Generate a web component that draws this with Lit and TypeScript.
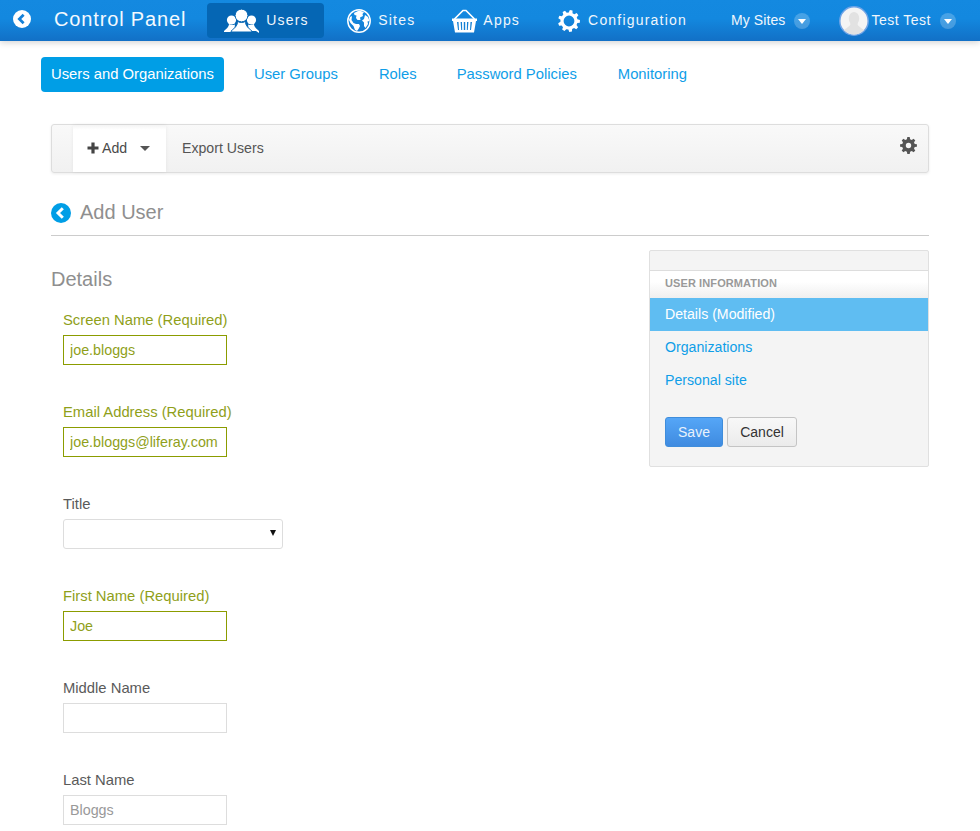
import { LitElement, html, css, svg } from "lit";
import { customElement } from "lit/decorators.js";

function gearPath(cx: number, cy: number, outer: number, inner: number, hole: number, teeth: number, rot = 0): string {
  let d = "";
  const step = (Math.PI * 2) / teeth;
  for (let i = 0; i < teeth; i++) {
    const a = i * step - Math.PI / 2 + rot;
    const pts: [number, number][] = [
      [inner, a - step * 0.32],
      [outer, a - step * 0.18],
      [outer, a + step * 0.18],
      [inner, a + step * 0.32],
    ];
    for (const [r, t] of pts) {
      d += `${d ? "L" : "M"}${(cx + r * Math.cos(t)).toFixed(2)} ${(cy + r * Math.sin(t)).toFixed(2)}`;
    }
  }
  d += `Z M${cx + hole} ${cy}A${hole} ${hole} 0 1 0 ${cx - hole} ${cy}A${hole} ${hole} 0 1 0 ${cx + hole} ${cy}Z`;
  return d;
}

const backIcon = (bg: string, fg: string, size: number) => html`<svg width=${size} height=${size} viewBox="0 0 20 20">
  <circle cx="10" cy="10" r="10" fill=${bg}></circle>
  <path d="M11.8 5.2 L7 10 L11.8 14.8" fill="none" stroke=${fg} stroke-width="3"></path>
</svg>`;

const usersIcon = html`<svg width="35" height="24" viewBox="0 0 35 24" fill="#fff">
  <circle cx="7.5" cy="11" r="4.6"></circle>
  <path d="M5 15 C5 18 2 20 0 22 L0 23 L10 23 L11 15.5 C9 16.4 7 16.2 5 15Z"></path>
  <circle cx="27.5" cy="11" r="4.6"></circle>
  <path d="M30 15 C30 18 33 20 35 22 L35 24 L32 22 L25 22 L24 15.5 C26 16.4 28 16.2 30 15Z"></path>
  <g stroke="#0566b4" stroke-width="1">
    <circle cx="17.5" cy="6.5" r="6.3"></circle>
    <path d="M13.5 12 C14 16 10.5 19.5 7.5 21.5 L7 23 L28 23 L27.5 21.5 C24.5 19.5 21 16 21.5 12 C20 14 15 14 13.5 12Z"></path>
  </g>
  <circle cx="17.5" cy="6.5" r="5.8"></circle>
</svg>`;

const globeIcon = html`<svg width="24" height="24" viewBox="0 0 24 24">
  <circle cx="12" cy="12" r="11.2" fill="none" stroke="#fff" stroke-width="1.5"></circle>
  <path fill="#fff" d="M7 4 L12 1.5 L17 3 L15.5 5 L16 7 L13 8.5 L13.5 11 L10.5 11 L9 9 L9.5 6.5 L7.5 6Z"></path>
  <path fill="#fff" d="M3 8 L5 7 L4.5 11 L6.5 14 L9 15 L12 15 L13 17 L11.5 20 L10 22 L8 21 L6.5 17 L3.5 14 L2 11Z"></path>
  <path fill="#fff" d="M18 6 L21 8 L22.5 12 L20.5 12.5 L21 15 L18.5 19 L17 17 L17 13.5 L15 11.5 L17 10Z"></path>
</svg>`;

const basketIcon = html`<svg width="25" height="24" viewBox="0 0 25 24" fill="#fff">
  <path d="M2.5 10 L11 1.5 L14 1.5 L22.5 10" fill="none" stroke="#fff" stroke-width="1.7"></path>
  <path d="M0 9.5 H25 V12 H24 L22 23.5 H3 L1 12 H0Z"></path>
  <path fill="#1480d4" d="M5 13 H6.5 L7 21 H6Z M8.6 13 H10 L10.2 21 H9.2Z M11.8 13 H13.2 V21 H11.8Z M15 13 H16.4 L15.8 21 H14.8Z M18.5 13 H20 L19 21 H18Z"></path>
</svg>`;

const configGear = html`<svg width="22" height="22" viewBox="0 0 22 22">
  <path fill="#fff" fill-rule="evenodd" d=${gearPath(11, 11, 11, 8.6, 5.4, 9, 0.2)}></path>
</svg>`;

const toolGear = html`<svg width="17" height="17" viewBox="0 0 17 17">
  <path fill="#555" fill-rule="evenodd" d=${gearPath(8.5, 8.5, 8.5, 6.4, 2.7, 8)}></path>
</svg>`;

const caret = html`<span class="caret-circle"></span>`;

const avatar = html`<svg class="avatar" width="30" height="30" viewBox="0 0 30 30">
  <defs><clipPath id="av"><circle cx="15" cy="15" r="13.5"></circle></clipPath></defs>
  <circle cx="15" cy="15" r="14.2" fill="#f4f4f4" stroke="#6ea3e6" stroke-width="1.5"></circle>
  <g clip-path="url(#av)">
    ${svg`<ellipse cx="15" cy="12.5" rx="5.2" ry="6.6" fill="#e2e2e2"></ellipse>
    <path d="M11.5 17 C12 20 7 22 5 24 L5 30 H25 V24 C23 22 18 20 18.5 17Z" fill="#e2e2e2"></path>`}
  </g>
</svg>`;

@customElement("app-root")
export class AppRoot extends LitElement {
  static styles = css`
    :host {
      display: block;
      font-family: "Liberation Sans", Arial, sans-serif;
      color: #555;
      background: #fff;
      height: 831px;
      overflow: hidden;
    }
    * { box-sizing: border-box; }
    a { text-decoration: none; }
    svg { display: block; flex: none; }

    .topbar {
      height: 41px;
      display: flex;
      align-items: center;
      background: linear-gradient(#1489e0 0%, #1388df 45%, #1270c6 100%);
      box-shadow: 0 2px 6px rgba(0, 0, 0, 0.16);
      color: #fff;
      position: relative;
    }
    .back { margin-left: 13px; margin-top: -3px; }
    .brand {
      margin-left: 23px;
      margin-top: -2px;
      font-size: 20px;
      letter-spacing: 0.85px;
      color: #f4f9fe;
      white-space: nowrap;
    }
    .nav-item {
      display: flex;
      align-items: center;
      height: 35px;
      font-size: 14px;
      letter-spacing: 1.2px;
      color: #f0f6fc;
      white-space: nowrap;
    }
    .nav-item span, .plain span { margin-top: -2px; }
    .nav-users {
      margin-left: 21px;
      width: 117px;
      padding-left: 17px;
      gap: 8px;
      background: #0566b4;
      border-radius: 4px;
    }
    .nav-users span { margin-left: -1px; }
    .nav-sites { margin-left: 23px; gap: 7px; }
    .nav-apps { margin-left: 37px; gap: 6px; }
    .nav-config { margin-left: 38px; gap: 8px; }
    .plain {
      display: flex;
      align-items: center;
      font-size: 14px;
      color: #f0f6fc;
      letter-spacing: 0.1px;
      white-space: nowrap;
    }
    .mysites { margin-left: 44px; gap: 9px; }
    .user { margin-left: 29px; }
    .user .name { margin-left: 2px; margin-right: 9px; letter-spacing: 0.5px; }
    .plain .caret-circle {
      display: block;
      position: relative;
      width: 16px;
      height: 16px;
      margin-top: 0;
      border-radius: 50%;
      background: rgba(255, 255, 255, 0.22);
    }
    .caret-circle::after {
      content: "";
      position: absolute;
      left: 4px;
      top: 6px;
      border-left: 4px solid transparent;
      border-right: 4px solid transparent;
      border-top: 5px solid #fff;
    }

    .subnav {
      display: flex;
      align-items: flex-start;
      margin: 16px 0 0 41px;
      height: 35px;
      font-size: 14.8px;
      line-height: 34px;
    }
    .subnav a { color: #0f9ee8; white-space: nowrap; }
    .subnav a.active {
      background: #009ee6;
      color: #fff;
      border-radius: 4px;
      height: 35px;
      padding: 0 10px;
      width: 183px;
    }
    .subnav a.ug { margin-left: 30px; }
    .subnav a.rl { margin-left: 41px; }
    .subnav a.pp { margin-left: 40px; }
    .subnav a.mn { margin-left: 41px; }

    .content { padding: 32px 51px 0; }
    .toolbar {
      height: 49px;
      border: 1px solid #ddd;
      border-radius: 3px;
      box-shadow: 0 1px 3px rgba(0, 0, 0, 0.08);
      background: linear-gradient(#f9f9f9, #f1f1f1);
      display: flex;
      align-items: stretch;
      font-size: 14.15px;
    }
    .add {
      margin-left: 21px;
      width: 93px;
      background: linear-gradient(#f4f4f4, #ffffff 10%);
      box-shadow: 0 0 4px rgba(0, 0, 0, 0.06);
      display: flex;
      align-items: center;
      padding: 0 0 2px 14px;
      gap: 3px;
      color: #4a4a4a;
    }
    .add .down {
      margin-left: 10px;
      margin-top: 1px;
      border-left: 5px solid transparent;
      border-right: 5px solid transparent;
      border-top: 5px solid #555;
    }
    .export { margin: -2px 0 0 16px; align-self: center; color: #555; }
    .spacer { flex: 1; }
    .tool-gear { margin: 12px 11px 0 0; }

    .title-row {
      display: flex;
      align-items: center;
      gap: 9px;
      height: 63px;
      border-bottom: 1px solid #ccc;
      padding-top: 17px;
      font-size: 20px;
      color: #8f8f8f;
    }

    .columns { display: flex; justify-content: space-between; align-items: flex-start; }
    .form { padding-top: 31px; }
    .form h3 {
      margin: 0;
      font-size: 20px;
      line-height: 24px;
      font-weight: 400;
      color: #8f8f8f;
    }
    .fields { padding: 20px 0 0 12px; display: flex; flex-direction: column; gap: 32px; }
    .field { display: flex; flex-direction: column; height: 60px; }
    .field label { font-size: 14.8px; line-height: 18px; height: 24px; color: #5a5a5a; }
    .field input {
      width: 164px;
      height: 30px;
      border: 1px solid #ddd;
      border-radius: 0;
      padding: 0 6px;
      font: 14.3px "Liberation Sans", Arial, sans-serif;
      color: #555;
      background: #fff;
      outline: none;
    }
    .field input::placeholder { color: #999; opacity: 1; }
    .select-wrap { position: relative; width: 220px; height: 30px; }
    .select-wrap::after {
      content: "";
      position: absolute;
      right: 7px;
      top: 11px;
      border-left: 3px solid transparent;
      border-right: 3px solid transparent;
      border-top: 6px solid #111;
      pointer-events: none;
    }
    .select-wrap select {
      appearance: none;
      display: block;
      width: 220px;
      height: 30px;
      border: 1px solid #ddd;
      border-radius: 3px;
      background: #fff;
      font: 14px "Liberation Sans", Arial, sans-serif;
    }
    .field.ok label { color: #8f9f1a; }
    .field.ok input { border-color: #8b9c00; color: #8f9f1a; }

    .panel {
      margin-top: 14px;
      width: 280px;
      height: 217px;
      background: #f4f4f4;
      border: 1px solid #e0e0e0;
      border-radius: 2px;
      font-size: 14.15px;
    }
    .panel-top { height: 19px; }
    .panel-head {
      height: 28px;
      border-top: 1px solid #ddd;
      background: linear-gradient(#fff, #fff 40%, #efefef);
      padding-left: 15px;
      font-size: 11px;
      line-height: 24px;
      font-weight: 700;
      letter-spacing: 0.1px;
      color: #999;
    }
    .panel a {
      display: block;
      height: 33px;
      line-height: 32px;
      padding-left: 15px;
      color: #0f9ee8;
    }
    .panel a.sel { background: #5fbdf2; color: #fff; }
    .btns { display: flex; gap: 4px; padding: 20px 0 0 15px; }
    .btn {
      height: 30px;
      font: 14px "Liberation Sans", Arial, sans-serif;
      border-radius: 3px;
      padding: 0;
    }
    .save {
      width: 58px;
      color: #e8f2fc;
      border: 1px solid #3f8ddb;
      background: linear-gradient(#55a6f7, #3f8be0);
    }
    .cancel {
      width: 70px;
      color: #333;
      border: 1px solid #c4c4c4;
      background: linear-gradient(#f8f8f8, #ebebeb);
    }
  `;

  render() {
    return html`
      <header class="topbar">
        <span class="back">${backIcon("#fff", "#1480d8", 18)}</span>
        <span class="brand">Control Panel</span>
        <span class="nav-item nav-users">${usersIcon}<span>Users</span></span>
        <span class="nav-item nav-sites">${globeIcon}<span>Sites</span></span>
        <span class="nav-item nav-apps">${basketIcon}<span>Apps</span></span>
        <span class="nav-item nav-config">${configGear}<span>Configuration</span></span>
        <span class="plain mysites"><span>My Sites</span>${caret}</span>
        <span class="plain user">${avatar}<span class="name">Test Test</span>${caret}</span>
      </header>

      <nav class="subnav">
        <a class="active" href="#">Users and Organizations</a>
        <a class="ug" href="#">User Groups</a>
        <a class="rl" href="#">Roles</a>
        <a class="pp" href="#">Password Policies</a>
        <a class="mn" href="#">Monitoring</a>
      </nav>

      <main class="content">
        <div class="toolbar">
          <div class="add">
            <svg width="12" height="12" viewBox="0 0 12 12"><path fill="#444" d="M4.4 0.5 H7.6 V4.4 H11.5 V7.6 H7.6 V11.5 H4.4 V7.6 H0.5 V4.4 H4.4Z"></path></svg>
            <span>Add</span><span class="down"></span>
          </div>
          <span class="export">Export Users</span>
          <span class="spacer"></span>
          <span class="tool-gear">${toolGear}</span>
        </div>

        <div class="title-row">${backIcon("#009ee6", "#fff", 20)}<span>Add User</span></div>

        <div class="columns">
          <section class="form">
            <h3>Details</h3>
            <div class="fields">
              <div class="field ok"><label>Screen Name (Required)</label><input value="joe.bloggs" /></div>
              <div class="field ok"><label>Email Address (Required)</label><input value="joe.bloggs@liferay.com" /></div>
              <div class="field"><label>Title</label><span class="select-wrap"><select><option></option></select></span></div>
              <div class="field ok"><label>First Name (Required)</label><input value="Joe" /></div>
              <div class="field"><label>Middle Name</label><input /></div>
              <div class="field"><label>Last Name</label><input placeholder="Bloggs" /></div>
            </div>
          </section>

          <aside class="panel">
            <div class="panel-top"></div>
            <div class="panel-head">USER INFORMATION</div>
            <a class="sel" href="#">Details (Modified)</a>
            <a href="#">Organizations</a>
            <a href="#">Personal site</a>
            <div class="btns">
              <button class="btn save">Save</button>
              <button class="btn cancel">Cancel</button>
            </div>
          </aside>
        </div>
      </main>
    `;
  }
}
